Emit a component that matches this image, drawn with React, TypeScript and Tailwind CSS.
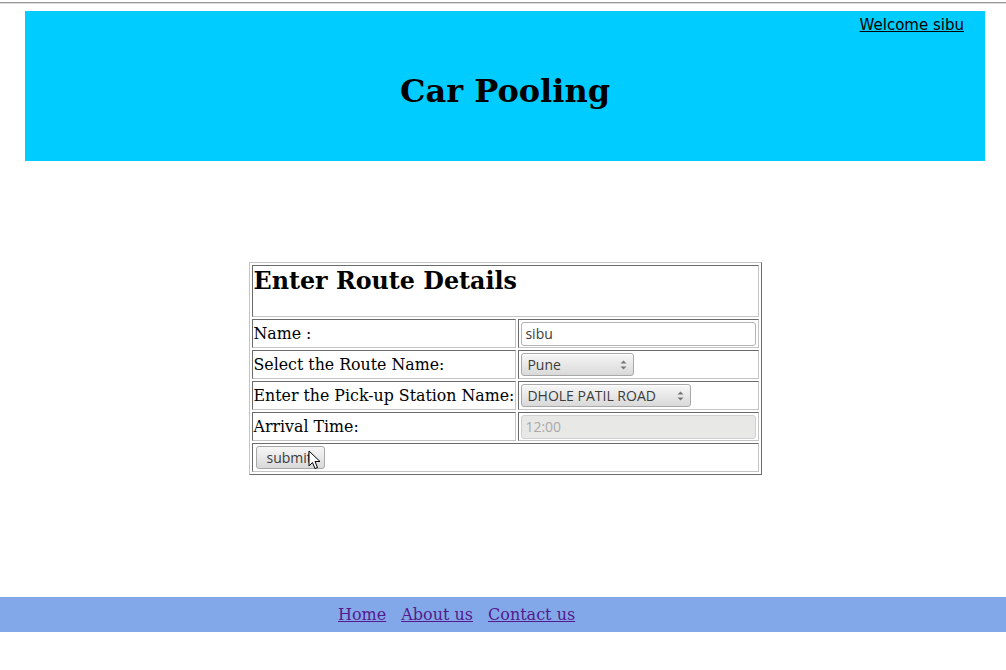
import React from "react";

const cellCls =
  "border border-t-[#6b6b6b] border-l-[#6b6b6b] border-r-[#c4c4c4] border-b-[#c4c4c4] p-[1px] align-middle";

const uiFont = { fontFamily: "'Open Sans', 'DejaVu Sans', sans-serif" };

function Arrows() {
  return (
    <svg width="7" height="12" viewBox="0 0 7 12" className="shrink-0">
      <path d="M0.5 4.5 L3.5 1.5 L6.5 4.5 Z" fill="#777" />
      <path d="M0.5 7.5 L3.5 10.5 L6.5 7.5 Z" fill="#777" />
    </svg>
  );
}

function FakeSelect({ value, w }: { value: string; w: string }) {
  return (
    <div
      className={`${w} h-[23px] flex items-center justify-between pl-[5px] pr-[6px] rounded-[3px] border border-[#a8a8a8] bg-gradient-to-b from-[#f7f7f7] to-[#d9d9d9] text-[14px] text-[#3c3c3c] shadow-[inset_0_1px_0_#fff]`}
      style={uiFont}
    >
      <span>{value}</span>
      <Arrows />
    </div>
  );
}

export default function App() {
  return (
    <div
      className="relative w-[1006px] h-[670px] bg-white overflow-hidden"
      style={{ fontFamily: "'DejaVu Serif', serif" }}
    >
      <div className="h-[2px]" />
      <div className="h-[1px] bg-[#9a9a9a]" />
      <div className="h-[1px] bg-[#dcdcdc]" />
      <div className="h-[7px]" />
      <div className="ml-[25px] w-[960px] h-[150px] bg-[#00ccff] relative flex flex-col">
        <div className="flex justify-end pr-[21px] pt-[4px]">
          <a
            href="#"
            className="text-black underline text-[15px] leading-[20px]"
            style={{ fontFamily: "'DejaVu Sans', sans-serif" }}
          >
            Welcome sibu
          </a>
        </div>
        <h1 className="text-center font-bold text-[32px] leading-[38px] mt-[37px] text-black">
          Car Pooling
        </h1>
      </div>

      <div className="ml-[25px] w-[960px] mt-[101px] flex justify-center">
        <table className="w-[513px] border-separate border-spacing-[2px] border border-t-[#c4c4c4] border-l-[#c4c4c4] border-r-[#6b6b6b] border-b-[#6b6b6b] text-[15.8px] text-black">
          <tbody>
            <tr>
              <td colSpan={2} className={`${cellCls} align-top`}>
                <h2 className="text-[23.8px] font-bold leading-[28px] mt-[0px] mb-[20px]">
                  Enter Route Details
                </h2>
              </td>
            </tr>
            <tr className="h-[29px]">
              <td className={`${cellCls} w-[262px] leading-[20px]`}>Name :</td>
              <td className={cellCls}>
                <div
                  className="mx-[1px] h-[24px] rounded-[3px] border border-[#b3b3b3] bg-white flex items-center px-[3px] text-[14px] text-[#3c3c3c]"
                  style={uiFont}
                >
                  sibu
                </div>
              </td>
            </tr>
            <tr className="h-[29px]">
              <td className={`${cellCls} leading-[20px]`}>Select the Route Name:</td>
              <td className={cellCls}>
                <div className="mx-[1px]">
                  <FakeSelect value="Pune" w="w-[113px]" />
                </div>
              </td>
            </tr>
            <tr className="h-[29px]">
              <td className={`${cellCls} leading-[20px] whitespace-nowrap`}>
                Enter the Pick-up Station Name:
              </td>
              <td className={cellCls}>
                <div className="mx-[1px]">
                  <FakeSelect value="DHOLE PATIL ROAD" w="w-[170px]" />
                </div>
              </td>
            </tr>
            <tr className="h-[29px]">
              <td className={`${cellCls} leading-[20px]`}>Arrival Time:</td>
              <td className={cellCls}>
                <div
                  className="mx-[1px] h-[24px] rounded-[3px] border border-[#cfcfcf] bg-[#e8e8e7] flex items-center px-[3px] text-[14px] text-[#a9a9a9]"
                  style={uiFont}
                >
                  12:00
                </div>
              </td>
            </tr>
            <tr className="h-[29px]">
              <td colSpan={2} className={cellCls}>
                <div className="relative ml-[2px] w-[69px]">
                  <div
                    className="h-[23px] w-[69px] rounded-[3px] border border-[#a8a8a8] bg-gradient-to-b from-[#f7f7f7] to-[#d9d9d9] flex items-center pl-[10px] text-[14px] text-[#3c3c3c]"
                    style={uiFont}
                  >
                    submit
                  </div>
                  <svg
                    width="14"
                    height="21"
                    viewBox="0 0 14 21"
                    className="absolute left-[52px] top-[4px]"
                  >
                    <path
                      d="M1 1 L1 16 L4.5 12.5 L7 18.5 L9.5 17.5 L7 11.5 L12 11.5 Z"
                      fill="#fff"
                      stroke="#000"
                      strokeWidth="1"
                      strokeLinejoin="miter"
                    />
                  </svg>
                </div>
              </td>
            </tr>
          </tbody>
        </table>
      </div>

      <div className="absolute left-0 right-0 top-[597px] h-[35px] bg-[#83a8ea] flex items-center pl-[338px] gap-[15px] text-[16px]">
        <a href="#" className="text-[#551a8b] underline">Home</a>
        <a href="#" className="text-[#551a8b] underline">About us</a>
        <a href="#" className="text-[#551a8b] underline">Contact us</a>
      </div>
    </div>
  );
}
